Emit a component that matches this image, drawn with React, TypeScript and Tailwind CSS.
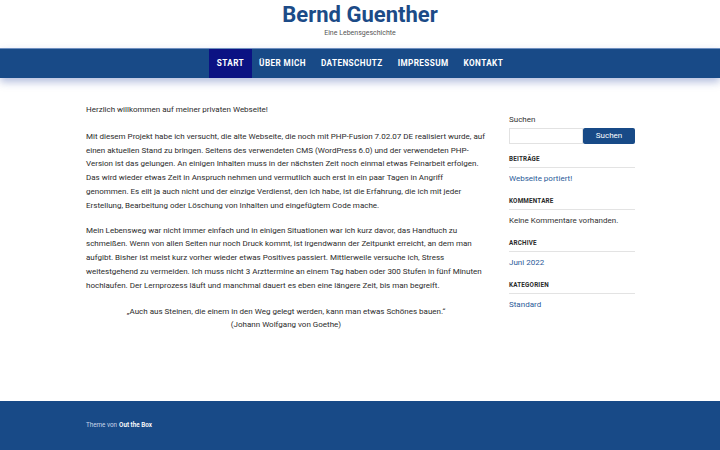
const NAV = ['START', 'ÜBER MICH', 'DATENSCHUTZ', 'IMPRESSUM', 'KONTAKT'];

const Widget = ({ title, children }: { title: string; children: React.ReactNode }) => (
  <div className="mt-[10.6px]">
    <h3 className="border-b border-[#e3e3e3] pb-[3px] text-[6.3px] font-bold uppercase tracking-[0.2px] text-[#2a2a2a]">{title}</h3>
    <div className="pt-[4px] text-[8px] leading-[14px]">{children}</div>
  </div>
);

export default function App() {
  return (
    <div className="flex min-h-[450px] flex-col bg-white font-['Roboto',sans-serif] text-[#333]">
      <header className="pt-[1px] text-center">
        <h1 className="text-[22px] font-bold leading-[28px] text-[#1c4b87]">Bernd Guenther</h1>
        <p className="text-[7px] leading-[9px] text-[#555]">Eine Lebensgeschichte</p>
      </header>
      <nav className="mt-[10px] flex h-[30px] justify-center border-t border-[#6f8fbf] bg-[#184a87] shadow-[0_4px_8px_rgba(40,70,160,0.35)]">
        {NAV.map((n, i) => (
          <a
            key={n}
            className={`flex items-center px-[7.5px] text-[8.2px] font-bold tracking-[0.4px] text-white ${i === 0 ? 'bg-[#0b1283]' : ''}`}
          >
            {n}
          </a>
        ))}
      </nav>
      <main className="flex flex-1 gap-[23px] pl-[86px] pt-[25px]">
        <div className="w-[400px] text-[8px] leading-[13.8px] text-[#2b2b2b]">
          <p>Herzlich willkommen auf meiner privaten Webseite!</p>
          <p className="mt-[13px]">
            Mit diesem Projekt habe ich versucht, die alte Webseite, die noch mit PHP-Fusion 7.02.07 DE realisiert wurde, auf
            einen aktuellen Stand zu bringen. Seitens des verwendeten CMS (WordPress 6.0) und der verwendeten PHP-Version ist
            das gelungen. An einigen Inhalten muss in der nächsten Zeit noch einmal etwas Feinarbeit erfolgen. Das wird wieder
            etwas Zeit in Anspruch nehmen und vermutlich auch erst in ein paar Tagen in Angriff genommen. Es eilt ja auch nicht
            und der einzige Verdienst, den ich habe, ist die Erfahrung, die ich mit jeder Erstellung, Bearbeitung oder Löschung
            von Inhalten und eingefügtem Code mache.
          </p>
          <p className="mt-[11px]">
            Mein Lebensweg war nicht immer einfach und in einigen Situationen war ich kurz davor, das Handtuch zu schmeißen.
            Wenn von allen Seiten nur noch Druck kommt, ist irgendwann der Zeitpunkt erreicht, an dem man aufgibt. Bisher ist
            meist kurz vorher wieder etwas Positives passiert. Mittlerweile versuche ich, Stress weitestgehend zu vermeiden.
            Ich muss nicht 3 Arzttermine an einem Tag haben oder 300 Stufen in fünf Minuten hochlaufen. Der Lernprozess läuft
            und manchmal dauert es eben eine längere Zeit, bis man begreift.
          </p>
          <p className="mt-[12px] text-center">
            „Auch aus Steinen, die einem in den Weg gelegt werden, kann man etwas Schönes bauen.“
            <br />
            (Johann Wolfgang von Goethe)
          </p>
        </div>
        <aside className="w-[126px] pt-[11px]">
          <label className="block text-[8px] leading-[12px] text-[#333]">Suchen</label>
          <div className="mt-[2px] flex h-[16px]">
            <input className="h-full w-[74px] border border-[#e2e2e2] bg-white outline-none" />
            <button className="h-full flex-1 rounded-[2px] bg-[#184a87] text-[8px] text-white">Suchen</button>
          </div>
          <Widget title="Beiträge">
            <a className="text-[#2a5a98]">Webseite portiert!</a>
          </Widget>
          <Widget title="Kommentare">
            <span>Keine Kommentare vorhanden.</span>
          </Widget>
          <Widget title="Archive">
            <a className="text-[#2a5a98]">Juni 2022</a>
          </Widget>
          <Widget title="Kategorien">
            <a className="text-[#2a5a98]">Standard</a>
          </Widget>
        </aside>
      </main>
      <footer className="flex h-[49px] items-center bg-[#184a87] pl-[86px] text-[6.3px] text-[#c9d6ea]">
        Theme von <span className="ml-[2px] font-semibold text-white">Out the Box</span>
      </footer>
    </div>
  );
}
